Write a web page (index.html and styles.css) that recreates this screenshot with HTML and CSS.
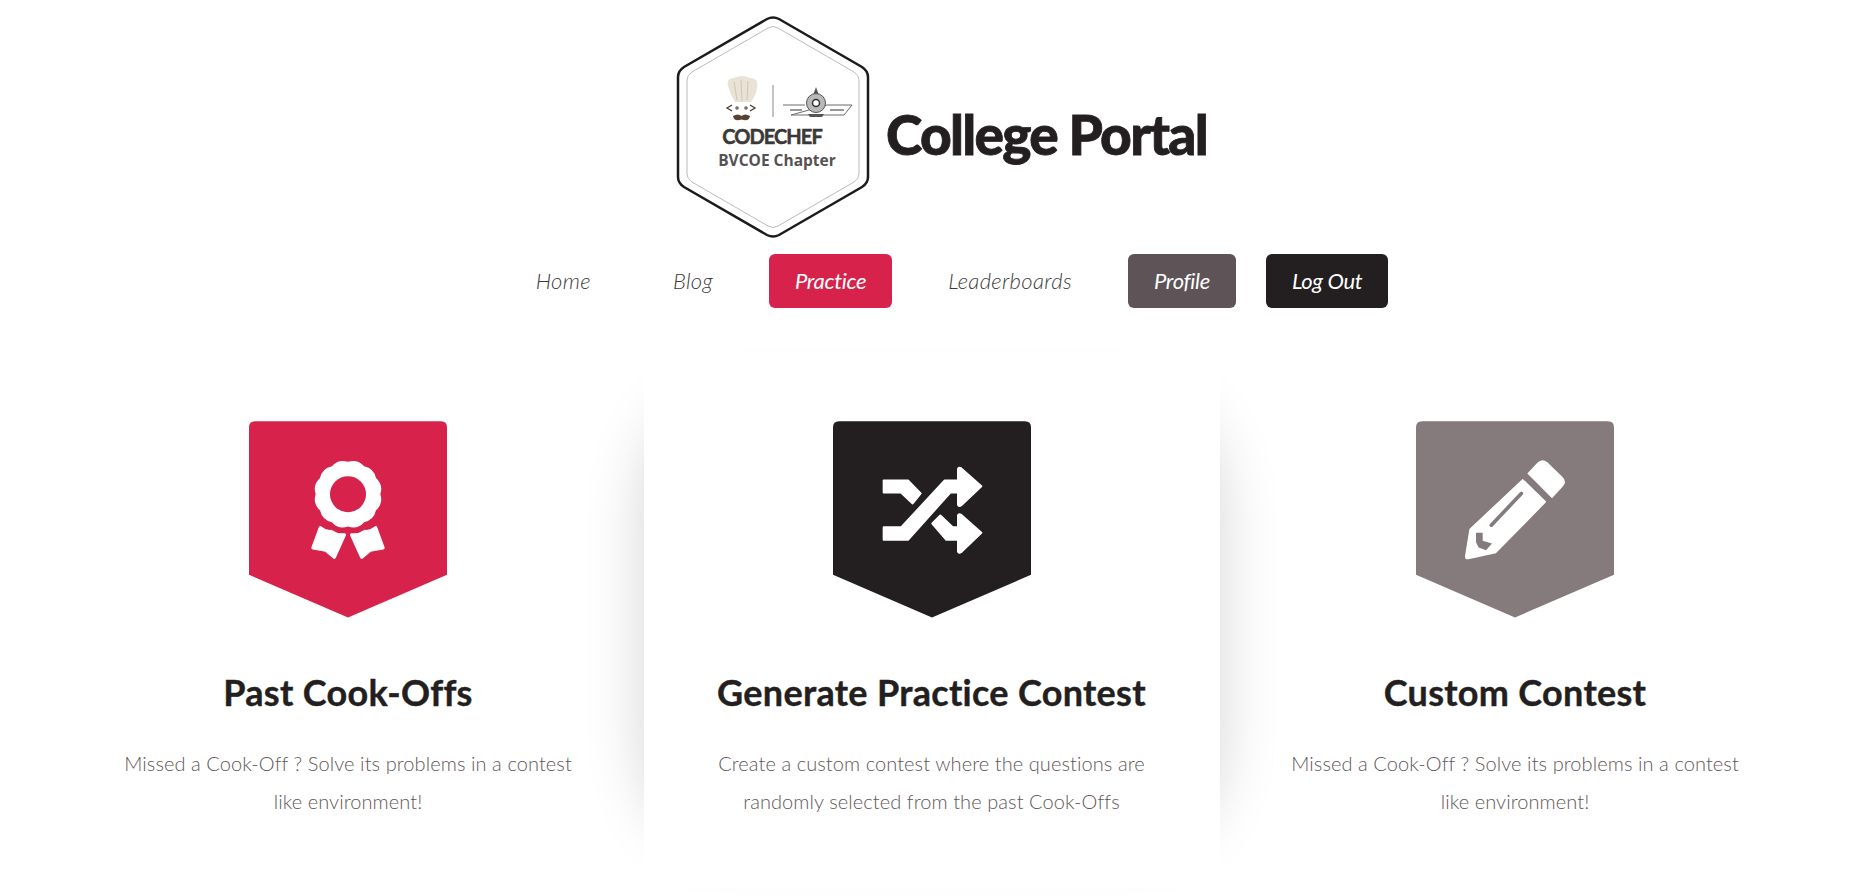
FILE: index.html
```html
<!DOCTYPE html>
<html>
  <head>
    <title>College Portal</title>
    <link rel="stylesheet" href="styles.css">
  </head>

  <body>
    <header class="brand">
      <div class="logo">
        <svg class="hexagon" viewBox="0 0 194 222" width="194" height="222">
          <path class="hex-outer" d="M91 3 Q97 0 103 3 L186 51 Q192 55 192 61 L192 161 Q192 167 186 171 L103 219 Q97 222 91 219 L8 171 Q2 167 2 161 L2 61 Q2 55 8 51 Z"/>
          <path class="hex-inner" d="M92 12 Q97 9 102 12 L178 56 Q183 59 183 64 L183 158 Q183 163 178 166 L102 210 Q97 213 92 210 L16 166 Q11 163 11 158 L11 64 Q11 59 16 56 Z"/>
          <path class="chef-hat" d="M52 70 Q50 62 58 62 Q66 58 74 62 Q83 62 81 72 Q80 79 75 86 L59 86 Q54 78 52 70 Z"/>
          <path class="chef-lines" d="M58 66 L61 84 M65 64 L66 85 M72 65 L71 84"/>
          <path class="chef-face" d="M56 89 L51 92 L56 95 M74 89 L79 92 L74 95"/>
          <circle class="chef-eye" cx="61" cy="92" r="1.8"/>
          <circle class="chef-eye" cx="70" cy="92" r="1.8"/>
          <path class="chef-stache" d="M57 100 Q62 97 65.500 100 Q69 97 74 100 Q73 106 65.500 103.500 Q58 106 57 100 Z"/>
          <path class="divider" d="M97 69 L97 101"/>
          <path class="wing" d="M107 89 L129 89 M151 89 L176 89 L168 99 L115 99 Z"/>
          <path class="wing-text" d="M114 94 L126 94 M154 94 L168 94"/>
          <circle class="crest" cx="140" cy="87" r="9.500"/>
          <circle class="crest-in" cx="140" cy="87" r="3.500"/>
          <path class="crest-top" d="M140 71 L142.500 78 L137.500 78 Z"/>
          <path class="crest-base" d="M132 98 L148 98 L146 101 L134 101 Z"/>
          <text class="logo-chef" x="96" y="128" text-anchor="middle">CODECHEF</text>
          <text class="logo-chapter" x="101" y="150" text-anchor="middle">BVCOE Chapter</text>
        </svg>
      </div>
      <h1 class="site-title">College Portal</h1>
    </header>

    <nav class="menu">
      <a class="menu-link" href="#">Home</a>
      <a class="menu-link" href="#">Blog</a>
      <a class="menu-link active" href="#">Practice</a>
      <a class="menu-link" href="#">Leaderboards</a>
      <a class="menu-link profile" href="#">Profile</a>
      <a class="menu-link logout" href="#">Log Out</a>
    </nav>

    <main class="cards">
      <section class="card">
        <svg class="badge" viewBox="57 33 594 590" width="198" height="197">
          <path class="badge-red" d="M75 33 L633 33 Q651 33 651 51 L651 494 L354 622 L57 494 L57 51 Q57 33 75 33 Z"/>
          <path class="icon" fill-rule="evenodd" d="M354 155 Q382.500 145.700 402.500 168 Q431.800 174.200 438 203.500 Q460.300 223.500 451 252 Q460.300 280.500 438 300.500 Q431.800 329.800 402.500 336 Q382.500 358.300 354 349 Q325.500 358.300 305.500 336 Q276.200 329.800 270 300.500 Q247.700 280.500 257 252 Q247.700 223.500 270 203.500 Q276.200 174.200 305.500 168 Q325.500 145.700 354 155 Z M354 198 A54 54 0 1 0 354 306 A54 54 0 1 0 354 198 Z"/>
          <path class="icon ribbon" d="M271 353 Q288 367 304 364 Q322 377 343 374 L313 441 L288 420 L249 413 Z"/>
          <path class="icon ribbon" d="M437 353 Q420 367 404 364 Q386 377 365 374 L395 441 L420 420 L459 413 Z"/>
        </svg>
        <h2 class="card-title">Past Cook-Offs</h2>
        <p class="card-text">Missed a Cook-Off ? Solve its problems in a contest like environment!</p>
      </section>

      <section class="card featured">
        <svg class="badge" viewBox="36 33 594 590" width="198" height="197">
          <path class="badge-dark" d="M54 33 L612 33 Q630 33 630 51 L630 494 L333 622 L36 494 L36 51 Q36 33 54 33 Z"/>
          <path class="icon round" d="M188 211 L261 211 L299 250 L275 280 L240 247 L188 247 Z"/>
          <path class="icon round" d="M188 351 L241 351 L371 211 L411 211 L411 176 Q414 170 420 174 L481 228 L420 286 Q414 290 411 284 L411 247 L388 247 L261 389 L188 389 Z"/>
          <path class="icon round" d="M334 340 L358 316 L395 351 L411 351 L411 316 Q414 310 420 314 L481 368 L420 426 Q414 430 411 424 L411 389 L376 389 Z"/>
        </svg>
        <h2 class="card-title">Generate Practice Contest</h2>
        <p class="card-text">Create a custom contest where the questions are randomly selected from the past Cook-Offs</p>
      </section>

      <section class="card">
        <svg class="badge" viewBox="48 33 594 590" width="198" height="197">
          <path class="badge-gray" d="M66 33 L624 33 Q642 33 642 51 L642 494 L345 622 L48 494 L48 51 Q48 33 66 33 Z"/>
          <path class="icon" d="M382 190 L412 158 Q426 144 442 156 L487 200 Q502 215 488 230 L456 264 Z"/>
          <path class="icon round" d="M368 210 L435 275 L287 426 L205 444 Q197 446 198 438 L211 358 Z"/>
          <path class="pencil-slit" d="M364 250 L274 345"/>
          <path class="pencil-tip" d="M228 368 L248 368 L248 392 L276 400 L258 420 L236 412 L228 396 Z"/>
        </svg>
        <h2 class="card-title">Custom Contest</h2>
        <p class="card-text">Missed a Cook-Off ? Solve its problems in a contest like environment!</p>
      </section>
    </main>
  </body>
</html>
```

FILE: styles.css
```css
* {
  box-sizing: border-box;
}

html,
body {
  height: 100%;
}

body {
  margin: 0;
  background: #ffffff;
  color: #231f20;
  font-family: 'Lato', 'Noto Sans', sans-serif;
  overflow: hidden;
}

/* header */

.brand {
  display: flex;
  justify-content: center;
  align-items: center;
  gap: 16px;
  padding-top: 16px;
  padding-left: 14px;
}

.logo {
  display: flex;
}

.hexagon {
  display: block;
}

.hex-outer {
  fill: #fff;
  stroke: #1c1a1b;
  stroke-width: 2.5;
}

.hex-inner {
  fill: none;
  stroke: #bdbbbb;
  stroke-width: 1;
}

.chef-hat {
  fill: #e9e3d6;
}

.chef-lines {
  stroke: #cfc6b2;
  stroke-width: 1;
  fill: none;
}

.chef-face {
  stroke: #4a3a30;
  stroke-width: 1.3;
  fill: none;
}

.chef-eye {
  fill: #7d6a5a;
}

.chef-stache {
  fill: #5a4030;
}

.divider {
  stroke: #8a8a8a;
  stroke-width: 1;
}

.wing {
  fill: none;
  stroke: #6b6b6b;
  stroke-width: 1;
}

.wing-text {
  fill: none;
  stroke: #777;
  stroke-width: 1.5;
}

.crest {
  fill: #b9b9b9;
  stroke: #555;
  stroke-width: 1;
}

.crest-in {
  fill: #fff;
  stroke: #333;
  stroke-width: 1.5;
}

.crest-top,
.crest-base {
  fill: #555;
}

.logo-chef {
  font-family: 'Lato', sans-serif;
  font-size: 20px;
  font-weight: 700;
  letter-spacing: -0.9px;
  fill: #3b3838;
  stroke: #3b3838;
  stroke-width: 0.5;
}

.logo-chapter {
  font-family: 'Open Sans', sans-serif;
  font-size: 15.5px;
  font-weight: 700;
  fill: #555253;
}

.site-title {
  margin: 0;
  padding-top: 14px;
  font-size: 55px;
  font-weight: 900;
  letter-spacing: -1.7px;
  line-height: 1;
  color: #231f20;
  -webkit-text-stroke: 0.8px #231f20;
}

/* nav */

.menu {
  display: flex;
  justify-content: center;
  gap: 30px;
  margin-top: 16px;
  padding-left: 29px;
}

.menu-link {
  display: flex;
  align-items: center;
  height: 54px;
  padding: 0 26px 2px;
  border-radius: 6px;
  font-size: 22px;
  font-style: italic;
  font-weight: 300;
  letter-spacing: 0.35px;
  color: #3f3a3b;
  text-decoration: none;
}

.menu-link.active,
.menu-link.profile,
.menu-link.logout {
  color: #fff;
  font-weight: 400;
  letter-spacing: -0.3px;
}

.menu-link.active {
  background: #d7234b;
}

.menu-link.profile {
  background: #5e5356;
}

.menu-link.logout {
  background: #231f20;
}

/* cards */

.cards {
  display: grid;
  grid-template-columns: repeat(3, 576px);
  gap: 7.5px;
  padding-left: 60px;
  margin-top: 45px;
}

.card {
  display: flex;
  flex-direction: column;
  align-items: center;
  height: 534px;
  padding: 68px 60px 0;
  text-align: center;
}

.card.featured {
  position: relative;
  background: #fff;
}

/* soft side shadow, the card's white background hides the middle of it */
.card.featured::before {
  content: '';
  position: absolute;
  top: 55px;
  bottom: 50px;
  left: 0;
  right: 0;
  z-index: -1;
  border-radius: 60px / 100px;
  box-shadow: 0 0 60px rgba(0, 0, 0, 0.17);
}

.badge {
  display: block;
}

.badge-red {
  fill: #d7234b;
}

.badge-dark {
  fill: #231f20;
}

.badge-gray {
  fill: #857a7c;
}

.icon {
  fill: #fff;
}

.icon.round {
  stroke: #fff;
  stroke-width: 6;
  stroke-linejoin: round;
}

.icon.ribbon {
  stroke: #fff;
  stroke-width: 10;
  stroke-linejoin: round;
}

.pencil-slit {
  fill: none;
  stroke: #857a7c;
  stroke-width: 11;
  stroke-linecap: round;
}

.pencil-tip {
  fill: #857a7c;
}

.card-title {
  margin: 49px 0 0;
  font-size: 36px;
  font-weight: 700;
  line-height: 50px;
  letter-spacing: 0.3px;
  color: #231f20;
  white-space: nowrap;
  -webkit-text-stroke: 0.4px #231f20;
}

.card-text {
  margin: 27px 0 0;
  font-size: 20px;
  font-weight: 300;
  line-height: 38px;
  letter-spacing: 0.08px;
  color: #5f5759;
}
```
